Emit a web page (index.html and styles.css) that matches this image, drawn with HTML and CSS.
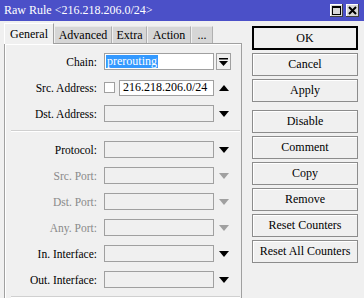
FILE: index.html
```html
<!DOCTYPE html>
<html>
<head>
<meta charset="utf-8">
<link rel="stylesheet" href="styles.css">
</head>
<body>
<div class="win">
  <div class="titlebar">
    <span class="title">Raw Rule &lt;216.218.206.0/24&gt;</span>
    <div class="tb-btns">
      <span class="tb-btn"><svg width="13" height="13" viewBox="0 0 13 13"><rect x="2.5" y="2.5" width="8" height="8" fill="none" stroke="#000" stroke-width="1"/><line x1="2" y1="3.5" x2="11" y2="3.5" stroke="#000" stroke-width="1"/></svg></span>
      <span class="tb-btn"><svg width="13" height="13" viewBox="0 0 13 13"><path d="M3 3 L10 10 M10 3 L3 10" stroke="#000" stroke-width="2"/></svg></span>
    </div>
  </div>
  <div class="body">
    <div class="left">
      <div class="tabs">
        <span class="tab active t-gen">General</span>
        <span class="tab t-adv">Advanced</span>
        <span class="tab t-ext">Extra</span>
        <span class="tab t-act">Action</span>
        <span class="tab t-more">...</span>
      </div>
      <div class="panel">
        <div class="row">
          <span class="lbl">Chain:</span>
          <span class="field white"><span class="sel">prerouting</span></span>
          <span class="ddbtn"><svg width="9" height="8" viewBox="0 0 9 8"><rect x="0" y="0" width="9" height="1.5" fill="#000"/><path d="M0 3 L9 3 L4.5 8 Z" fill="#000"/></svg></span>
        </div>
        <div class="row">
          <span class="lbl">Src. Address:</span>
          <span class="combo"><span class="chk"></span><span class="field white grow">216.218.206.0/24</span></span>
          <span class="arrow"><svg width="10" height="6" viewBox="0 0 10 6"><path d="M0 6 L10 6 L5 0 Z" fill="#000"/></svg></span>
        </div>
        <div class="row">
          <span class="lbl">Dst. Address:</span>
          <span class="field"></span>
          <span class="arrow"><svg width="10" height="6" viewBox="0 0 10 6"><path d="M0 0 L10 0 L5 6 Z" fill="#000"/></svg></span>
        </div>
        <div class="sep"></div>
        <div class="row">
          <span class="lbl">Protocol:</span>
          <span class="field"></span>
          <span class="arrow"><svg width="10" height="6" viewBox="0 0 10 6"><path d="M0 0 L10 0 L5 6 Z" fill="#000"/></svg></span>
        </div>
        <div class="row dim">
          <span class="lbl">Src. Port:</span>
          <span class="field"></span>
          <span class="arrow"><svg width="10" height="6" viewBox="0 0 10 6"><path d="M0 0 L10 0 L5 6 Z" fill="#a0a0a0"/></svg></span>
        </div>
        <div class="row dim">
          <span class="lbl">Dst. Port:</span>
          <span class="field"></span>
          <span class="arrow"><svg width="10" height="6" viewBox="0 0 10 6"><path d="M0 0 L10 0 L5 6 Z" fill="#a0a0a0"/></svg></span>
        </div>
        <div class="row dim">
          <span class="lbl">Any. Port:</span>
          <span class="field"></span>
          <span class="arrow"><svg width="10" height="6" viewBox="0 0 10 6"><path d="M0 0 L10 0 L5 6 Z" fill="#a0a0a0"/></svg></span>
        </div>
        <div class="row">
          <span class="lbl">In. Interface:</span>
          <span class="field"></span>
          <span class="arrow"><svg width="10" height="6" viewBox="0 0 10 6"><path d="M0 0 L10 0 L5 6 Z" fill="#000"/></svg></span>
        </div>
        <div class="row">
          <span class="lbl">Out. Interface:</span>
          <span class="field"></span>
          <span class="arrow"><svg width="10" height="6" viewBox="0 0 10 6"><path d="M0 0 L10 0 L5 6 Z" fill="#000"/></svg></span>
        </div>
        <div class="sep"></div>
      </div>
    </div>
    <div class="buttons">
      <span class="btn default">OK</span>
      <span class="btn">Cancel</span>
      <span class="btn">Apply</span>
      <span class="btn gap">Disable</span>
      <span class="btn">Comment</span>
      <span class="btn">Copy</span>
      <span class="btn">Remove</span>
      <span class="btn">Reset Counters</span>
      <span class="btn">Reset All Counters</span>
    </div>
  </div>
</div>
</body>
</html>
```
FILE: styles.css
```css
html, body {
  margin: 0;
  padding: 0;
  width: 364px;
  height: 298px;
  overflow: hidden;
  background: #f0f0f0;
}
.win {
  font-family: "Liberation Serif", "DejaVu Serif", serif;
  font-size: 12px;
  color: #000;
  width: 364px;
  height: 298px;
}
.titlebar {
  height: 21px;
  background: #4b50c8;
  display: flex;
  align-items: center;
  justify-content: space-between;
  padding-left: 4px;
  padding-right: 5px;
}
.title {
  color: #fff;
  font-size: 12px;
  line-height: 21px;
}
.tb-btns {
  display: flex;
  gap: 3px;
  align-self: flex-start;
  margin-top: 4px;
}
.tb-btn {
  width: 13px;
  height: 13px;
  background: #d8d8d8;
  box-shadow: inset -1px -1px #404040, inset 1px 1px #fff;
  display: block;
}
.tb-btn svg { display: block; }
.body {
  display: flex;
  align-items: flex-start;
}
.left {
  margin-left: 4px;
  width: 238px;
  margin-top: 2px;
}
.tabs {
  display: flex;
  align-items: flex-end;
  height: 20px;
  position: relative;
  z-index: 1;
}
.tab {
  height: 17px;
  line-height: 17px;
  background: #d6d6d6;
  border-top: 1px solid #e8e8e8;
  border-right: 1px solid #b0b0b0;
  margin-right: 1px;
  box-sizing: border-box;
  font-size: 12px;
  text-align: center;
}
.t-gen { width: 50px; }
.t-adv { width: 57px; }
.t-ext { width: 34px; }
.t-act { width: 43px; }
.t-more { width: 21px; }
.tab.active {
  height: 21px;
  line-height: 20px;
  background: #f0f0f0;
  border-top: 1px solid #fff;
  border-left: 1px solid #fff;
  border-right: 1px solid #a0a0a0;
  margin-bottom: -1px;
}
.panel {
  border: 1px solid #a0a0a0;
  border-bottom: none;
  box-shadow: inset 1px 1px #fff;
  height: 260px;
  padding-top: 9px;
  box-sizing: border-box;
  display: flex;
  flex-direction: column;
  gap: 9px;
}
.row {
  display: grid;
  grid-template-columns: 99px 110px 2px 15px;
  height: 17px;
  align-items: center;
}
.row > :nth-child(3) { grid-column: 4; }
.lbl {
  text-align: right;
  padding-right: 7px;
  font-size: 11.5px;
  box-sizing: border-box;
  white-space: nowrap;
}
.dim .lbl { color: #8a8a8a; }
.field {
  height: 17px;
  box-sizing: border-box;
  border: 1px solid #a0a0a0;
  background: #f0f0f0;
  display: flex;
  align-items: center;
  padding-left: 1px;
  font-size: 12px;
  white-space: nowrap;
  overflow: hidden;
}
.field.white { background: #fff; }
.sel {
  background: #3399ff;
  color: #fff;
  line-height: 13px;
  padding: 0 1px;
}
.combo {
  display: flex;
  align-items: center;
  gap: 4px;
}
.chk {
  width: 11px;
  height: 11px;
  box-sizing: border-box;
  border: 1px solid #a0a0a0;
  background: #fff;
  flex: none;
}
.grow { flex: 1; padding-left: 3px; height: 16px; }
.ddbtn {
  height: 17px;
  box-sizing: border-box;
  border: 1px solid #a0a0a0;
  background: #f0f0f0;
  display: flex;
  align-items: center;
  justify-content: center;
}
.ddbtn svg { display: block; }
.arrow {
  display: flex;
  align-items: center;
  justify-content: center;
  padding-left: 1px;
}
.arrow svg { display: block; }
.sep {
  margin: -1px 1px 0 6px;
  height: 0;
  border-top: 1px solid #d0d0d0;
  border-bottom: 1px solid #fff;
}
.buttons {
  margin-left: 10px;
  margin-top: 5px;
  width: 106px;
  display: flex;
  flex-direction: column;
  gap: 3px;
}
.btn {
  height: 23px;
  box-sizing: border-box;
  border: 1px solid #8c8c8c;
  box-shadow: inset 1px 1px #fff;
  background: #f0f0f0;
  display: flex;
  align-items: center;
  justify-content: center;
  font-size: 12px;
}
.btn.default { border: 2px solid #000; box-shadow: none; height: 24px; }
.btn.gap { margin-top: 5px; }
```
